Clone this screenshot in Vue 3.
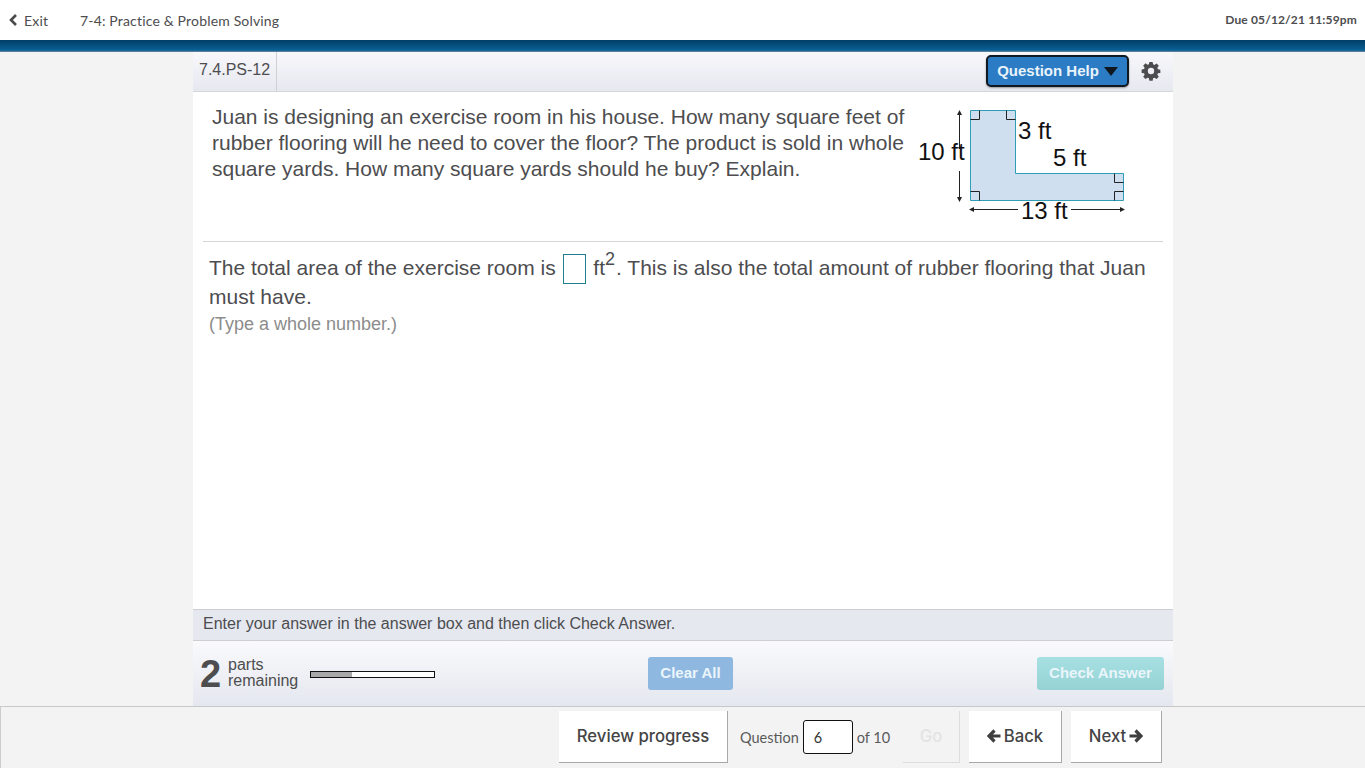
<script setup>
const title = '7-4: Practice & Problem Solving'
</script>

<template>
  <div class="page">
    <header class="top">
      <div class="exit">
        <svg width="10" height="12" viewBox="0 0 10 12"><path d="M8 1 3 6l5 5" fill="none" stroke="#4a4a4a" stroke-width="2.6"/></svg>
        <span>Exit</span>
      </div>
      <div class="crumb">{{ title }}</div>
      <div class="due">Due 05/12/21 11:59pm</div>
    </header>
    <div class="rule"></div>
    <main class="panel">
      <div class="head">
        <div class="qid">7.4.PS-12</div>
        <div class="tools">
          <button class="help">Question Help<span class="caret"></span></button>
          <svg class="gear" width="20" height="20" viewBox="-1 -1 22 22">
            <path fill="#4d4d4f" fill-rule="evenodd" d="M8.2 0h3.6l.5 2.700 1.500.6 2.300-1.600 2.500 2.500-1.600 2.300.6 1.500 2.700.5v3.600l-2.700.5-.6 1.500 1.600 2.300-2.500 2.500-2.300-1.600-1.500.6-.5 2.700H8.200l-.5-2.700-1.500-.6-2.300 1.600-2.500-2.500 1.600-2.300-.6-1.500-2.700-.5V8.400l2.700-.5.6-1.500-1.600-2.300 2.500-2.500 2.300 1.600 1.500-.6zM10 6.500a3.500 3.500 0 1 0 0 7 3.500 3.500 0 0 0 0-7z"/>
          </svg>
        </div>
      </div>
      <div class="body">
        <section class="problem">
          <p class="statement">Juan is designing an exercise room in his house. How many square feet of rubber flooring will he need to cover the floor? The product is sold in whole square yards. How many square yards should he buy? Explain.</p>
          <svg class="figure" width="230" height="130" viewBox="0 0 230 130">
            <path d="M60.500 10.500h45v63h108v27h-153z" fill="#cfdff0" stroke="#2f9db5" stroke-width="1"/>
            <path d="M60.500 19.500h9v-9M96.500 10.500v9h9M204.500 73.500v9h9M204.500 100.500v-9h9M60.500 91.500h9v9" fill="none" stroke="#222" stroke-width="1"/>
            <path d="M49.500 13v36M49.500 71v29M62 109.500h46M161 109.500h52" fill="none" stroke="#222" stroke-width="1"/>
            <path d="M49.500 10l-2.500 5h5zM49.500 102l-2.500-5h5zM59 109.500l5-2.500v5zM215 109.500l-5-2.500v5z" fill="#222"/>
            <text x="8" y="59.500">10 ft</text>
            <text x="108" y="39">3 ft</text>
            <text x="143" y="66">5 ft</text>
            <text x="111" y="119">13 ft</text>
          </svg>
        </section>
        <section class="answer">
          <p class="line">The total area of the exercise room is <span class="box"></span> ft<sup>2</sup>. This is also the total amount of rubber flooring that Juan must have.</p>
          <p class="hint">(Type a whole number.)</p>
        </section>
      </div>
      <div class="instruct">Enter your answer in the answer box and then click Check Answer.</div>
      <div class="actions">
        <div class="parts">
          <span class="count">2</span>
          <span class="label">parts<br>remaining</span>
          <span class="bar"><span class="fill"></span></span>
        </div>
        <button class="clear">Clear All</button>
        <button class="check">Check Answer</button>
      </div>
    </main>
    <footer class="foot">
      <button class="nav review">Review progress</button>
      <div class="jump">
        <span>Question</span>
        <span class="num">6</span>
        <span>of 10</span>
      </div>
      <button class="nav go">Go</button>
      <button class="nav back">
        <svg width="14" height="14" viewBox="0 0 14 14"><path d="M7.500 1.500 2 7l5.500 5.500M3 7h10.500" fill="none" stroke="#3f3f3f" stroke-width="3.200"/></svg>
        Back
      </button>
      <button class="nav next">
        Next
        <svg width="14" height="14" viewBox="0 0 14 14"><path d="M6.500 1.500 12 7l-5.500 5.500M11 7H.5" fill="none" stroke="#3f3f3f" stroke-width="3.200"/></svg>
      </button>
    </footer>
  </div>
</template>

<style scoped>
.page { height: 768px; display: flex; flex-direction: column; background: #f3f3f3; overflow: hidden; font-family: "Liberation Sans", Arial, sans-serif; color: #4d4d4f; }
.top { height: 40px; flex: none; background: #fff; display: flex; align-items: center; padding: 0 8px; font-family: Lato, sans-serif; font-size: 14px; color: #4d4d4f; }
.exit { display: flex; align-items: center; gap: 6px; width: 72px; letter-spacing: .2px; }
.crumb { flex: 1; letter-spacing: .17px; }
.due { font-size: 12px; font-weight: 700; letter-spacing: .15px; margin-bottom: 1px; }
.rule { height: 12px; flex: none; background: linear-gradient(#003f66, #0a5f96 85%, #6f8ba0); }
.panel { width: 980px; height: 654px; flex: none; margin: 0 auto 0 193px; display: flex; flex-direction: column; }
.head { height: 40px; flex: none; display: flex; justify-content: space-between; background: linear-gradient(#f8f8fb, #e6e8f0); border-bottom: 1px solid #d6d6d8; box-sizing: border-box; }
.qid { width: 84px; box-sizing: border-box; border-right: 1px solid #d0d0d4; padding: 9px 0 0 6px; font-size: 16px; }
.tools { display: flex; align-items: center; gap: 12px; padding-right: 12px; }
.help { width: 143px; height: 32px; box-sizing: border-box; border: 2px solid #101820; border-radius: 5px; background: #2b7cc4; color: #e9f3fb; font: 700 15px "Liberation Sans", sans-serif; display: flex; align-items: center; justify-content: center; gap: 5px; padding: 0 0 1px; box-shadow: 0 1px 2px #9a9a9a; margin-top: -1px; }
.caret { border-left: 7.500px solid transparent; border-right: 7.500px solid transparent; border-top: 9px solid #10181f; margin-top: 2px; }
.gear { display: block; margin-top: -1px; }
.body { flex: 1; min-height: 0; background: #fff; padding: 0 10px; }
.problem { height: 150px; box-sizing: border-box; border-bottom: 1px solid #d5d5d5; display: flex; justify-content: space-between; padding-left: 9px; }
.statement { width: 697px; flex: none; margin: 12px 0 0; font-size: 21px; line-height: 26px; }
.figure { margin: 8px 23px 0 0; display: block; flex: none; }
.figure text { font: 24px "Liberation Sans", sans-serif; fill: #111; }
.answer { padding: 11px 6px 0; }
.line { margin: 0; font-size: 21px; line-height: 29px; width: 945px; }
.box { display: inline-block; width: 21px; height: 28px; border: 1px solid #1f7f92; vertical-align: -7px; margin: 0 2px -2px 1px; }
sup { font-size: 18px; line-height: 0; vertical-align: 10px; margin-right: 1px; }
.hint { margin: 1px 0 0; font-size: 18px; line-height: 24px; color: #8c8c8c; }
.instruct { height: 32px; flex: none; box-sizing: border-box; background: #e5e8ef; border-top: 1px solid #ccced2; border-bottom: 1px solid #ccced2; padding: 5px 10px 0; font-size: 16px; }
.actions { height: 65px; flex: none; display: flex; align-items: center; background: linear-gradient(#fafafc, #e4e7ef); padding: 0 9px 0 7px; }
.parts { display: flex; align-items: center; width: 448px; }
.count { font-size: 38px; font-weight: 700; width: 28px; line-height: 38px; }
.label { font-size: 16px; line-height: 16px; width: 82px; margin-top: -2px; }
.bar { display: block; width: 123px; height: 5px; border: 1px solid #111; background: #fff; margin-top: 2px; }
.fill { display: block; width: 41px; height: 100%; background: #a9a9ab; }
.clear, .check { height: 33px; border: 0; border-radius: 3px; color: #eaf5fb; font: 700 15px "Liberation Sans", sans-serif; padding: 0 0 2px; }
.clear { width: 85px; background: #8fb8e0; }
.check { width: 127px; margin-left: auto; background: linear-gradient(#a6e0e2, #96d2d4); }
.foot { flex: 1; border-top: 1px solid #c8c8c8; box-shadow: inset 1px 0 #ccc; display: flex; align-items: flex-start; padding: 4px 203px 0 559px; font-family: Lato, sans-serif; }
.nav { height: 52px; box-sizing: border-box; border: 0; border-right: 1px solid #a8a8a8; border-bottom: 1px solid #a8a8a8; background: #fff; color: #444; font: 450 16.700px Inter, sans-serif; padding: 0 0 2px; display: flex; align-items: center; justify-content: center; gap: 3px; }
.review { width: 169px; }
.jump { width: 175px; height: 52px; display: flex; align-items: center; gap: 4px; padding-left: 12px; box-sizing: border-box; font-size: 14.500px; color: #5a5a5a; }
.num { width: 50px; height: 34px; box-sizing: border-box; border: 1px solid #111; border-radius: 3px; background: #fff; padding: 8px 0 0 10px; color: #333; }
.go { width: 57px; background: #f3f3f3; color: #e3e3e3; border-color: #ddd; margin-right: 9px; }
.back { width: 93px; margin-right: 9px; }
.next { width: 91px; }
</style>
